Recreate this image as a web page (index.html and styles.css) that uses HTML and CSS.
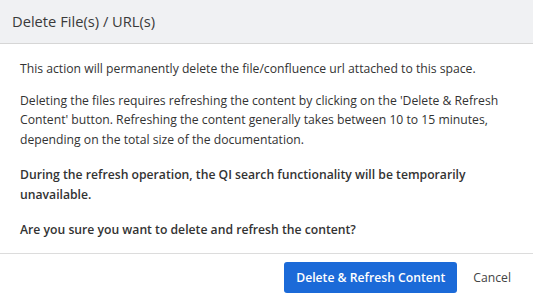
FILE: index.html
```html
<!DOCTYPE html>
<html>
<head>
<meta charset="utf-8">
<link rel="stylesheet" href="styles.css">
</head>
<body>
<div class="dialog">
  <div class="dialog-header">
    <h2 class="dialog-title">Delete File(s) / URL(s)</h2>
  </div>
  <div class="dialog-body">
    <p>This action will permanently delete the file/confluence url attached to this space.</p>
    <p>Deleting the files requires refreshing the content by clicking on the 'Delete &amp; Refresh Content' button. Refreshing the content generally takes between 10 to 15 minutes, depending on the total size of the documentation.</p>
    <p class="strong">During the refresh operation, the QI search functionality will be temporarily unavailable.</p>
    <p class="strong">Are you sure you want to delete and refresh the content?</p>
  </div>
  <div class="dialog-footer">
    <button class="btn btn-primary">Delete &amp; Refresh Content</button>
    <button class="btn btn-link">Cancel</button>
  </div>
</div>
</body>
</html>
```
FILE: styles.css
```css
html, body {
  margin: 0;
  padding: 0;
  background: #ffffff;
}
body {
  font-family: "Open Sans", "Noto Sans", sans-serif;
  color: #333333;
}
.dialog {
  width: 533px;
  height: 299px;
  display: flex;
  flex-direction: column;
  box-sizing: border-box;
}
.dialog-header {
  height: 44px;
  flex: none;
  box-sizing: border-box;
  background: #f0f1f3;
  border-bottom: 1px solid #d6d6d6;
  display: flex;
  align-items: center;
  padding: 0 12px 1px 12px;
}
.dialog-title {
  margin: 0;
  font-size: 14.7px;
  font-weight: 400;
  color: #3a3a3a;
}
.dialog-body {
  flex: 1;
  padding: 15px 16px 0 20px;
  font-size: 12.2px;
  line-height: 19.5px;
}
.dialog-body p {
  margin: 0 0 12px 0;
}
.dialog-body .strong {
  font-weight: 600;
  margin-top: 16px;
}
.dialog-footer {
  flex: none;
  border-top: 1px solid #dcdcdc;
  height: 46px;
  box-sizing: border-box;
  display: flex;
  justify-content: flex-end;
  align-items: center;
  gap: 8px;
  padding: 1px 14px 0 20px;
}
.btn {
  font-family: inherit;
  font-size: 12.2px;
  border: none;
  cursor: pointer;
}
.btn-primary {
  background: #1b6ad8;
  color: #ffffff;
  font-weight: 600;
  font-size: 12.2px;
  height: 31px;
  width: 173px;
  padding: 0;
  border-radius: 3px;
}
.btn-link {
  background: transparent;
  color: #444444;
  padding: 0 8px;
  height: 31px;
}
```
